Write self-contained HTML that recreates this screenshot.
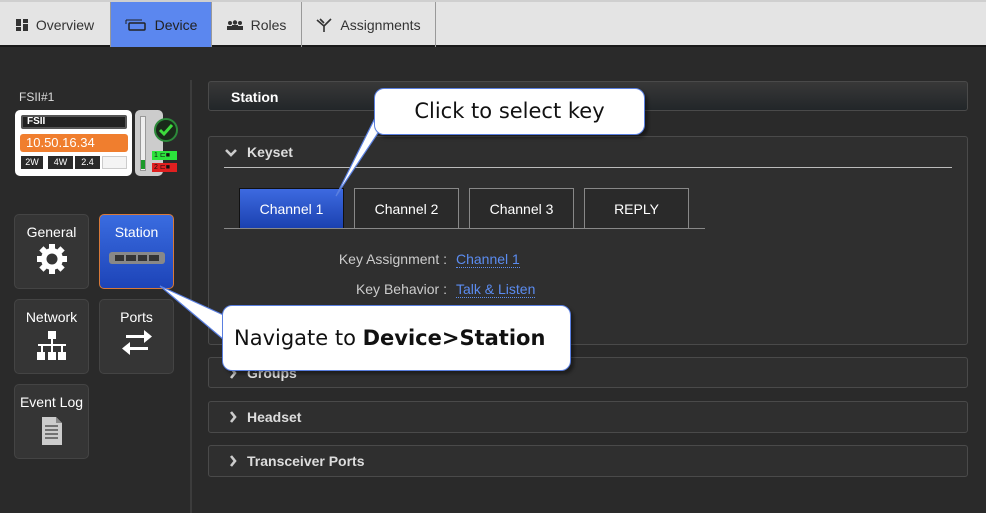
<!DOCTYPE html>
<html><head><meta charset="utf-8"><style>
*{box-sizing:border-box;margin:0;padding:0}
body{width:986px;height:513px;background:#2a2a2a;font-family:"Liberation Sans",sans-serif;position:relative;overflow:hidden;color:#fff}
.abs{position:absolute}
.top{left:0;top:0;width:986px;height:47px;background:#e4e4e4;border-top:2px solid #cfcfcf;border-bottom:2px solid #1a1a1a}
.tab{position:absolute;top:0;height:45px;border-right:1px solid #999;color:#333;font-size:14px;display:flex;align-items:center;justify-content:center;gap:8px}
.tile{position:absolute;width:75px;height:75px;border-radius:5px;background:#353535;border:1px solid #444;font-size:14px;text-align:center;padding-top:9px}
.panel{position:absolute;left:208px;width:760px;border:1px solid #4a4a4a;border-radius:3px;background:#2f2f2f;font-weight:bold;font-size:14px;color:#ddd}
.key{position:absolute;top:188px;height:40px;width:105px;border:1px solid #888;border-bottom:none;font-size:14px;display:flex;align-items:center;justify-content:center;color:#fff;background:#2a2a2a}
.lbl{position:absolute;font-size:14px;color:#ccc;text-align:right;width:200px;left:247px}
.lnk{position:absolute;left:456px;font-size:14px;color:#5b8cf0;border-bottom:1px dotted #5b8cf0;line-height:16px}
.chev{display:inline-block;margin-right:10px;vertical-align:-1px}
</style></head><body>
<div class="abs top">
 <div class="tab" style="left:0;width:111px"><svg width="12" height="12"><rect x="0" y="0" width="5" height="7" fill="#333"/><rect x="7" y="0" width="5" height="4" fill="#333"/><rect x="0" y="8" width="5" height="4" fill="#333"/><rect x="7" y="5" width="5" height="7" fill="#333"/></svg>Overview</div>
 <div class="tab" style="left:111px;width:101px;background:#5b87ef;color:#222"><svg width="22" height="12"><path d="M1 1h16M1 1v4" stroke="#222" fill="none"/><rect x="4" y="4" width="16" height="7" rx="1" stroke="#222" stroke-width="1.5" fill="none"/></svg>Device</div>
 <div class="tab" style="left:212px;width:90px"><svg width="16" height="10"><circle cx="3" cy="3" r="2" fill="#333"/><circle cx="8" cy="2.5" r="2.2" fill="#333"/><circle cx="13" cy="3" r="2" fill="#333"/><rect x="0" y="6" width="5" height="4" fill="#333"/><rect x="5" y="5" width="6" height="5" fill="#333"/><rect x="11" y="6" width="5" height="4" fill="#333"/></svg>Roles</div>
 <div class="tab" style="left:302px;width:134px"><svg width="16" height="14"><path d="M1 2l7 6 7-7M8 8v6M4 1l4 4" stroke="#333" stroke-width="1.6" fill="none"/></svg>Assignments</div>
</div>
<div class="abs" style="left:190px;top:80px;width:2px;height:433px;background:#3c3c3c"></div>
<div class="abs" style="left:19px;top:90px;font-size:12px;color:#ddd">FSII#1</div>
<div class="abs" style="left:15px;top:110px;width:117px;height:66px;background:#fff;border-radius:5px"></div>
<div class="abs" style="left:21px;top:115px;width:106px;height:14px;background:#222;border:2px solid #555;border-radius:2px;font-size:10px;font-weight:bold;padding-left:4px;line-height:10px">FSII</div>
<div class="abs" style="left:20px;top:134px;width:108px;height:18px;background:#f07e2e;border-radius:3px;font-size:13px;padding-left:6px;line-height:18px">10.50.16.34</div>
<div class="abs" style="left:21px;top:156px;width:22px;height:13px;background:#2a2a2a;font-size:9px;text-align:center;line-height:13px">2W</div>
<div class="abs" style="left:48px;top:156px;width:25px;height:13px;background:#2a2a2a;font-size:9px;text-align:center;line-height:13px">4W</div>
<div class="abs" style="left:75px;top:156px;width:25px;height:13px;background:#2a2a2a;font-size:9px;text-align:center;line-height:13px">2.4</div>
<div class="abs" style="left:102px;top:156px;width:25px;height:13px;background:#f4f4f4;border:1px solid #ccc"></div>
<div class="abs" style="left:135px;top:110px;width:28px;height:66px;background:#ccc;border-radius:5px"></div>
<div class="abs" style="left:140px;top:116px;width:6px;height:55px;background:#eee;border:1px solid #999"></div>
<div class="abs" style="left:141px;top:160px;width:4px;height:9px;background:#1a9a2a"></div>
<div class="abs" style="left:154px;top:118px;width:24px;height:24px;border-radius:50%;background:#1a2a1a;border:2px solid #2c8a3a"><svg width="20" height="20"><path d="M4 10l4 4 8-9" stroke="#3ddc3d" stroke-width="3" fill="none"/></svg></div>
<div class="abs" style="left:152px;top:151px;width:25px;height:9px;background:#2ce33c;font-size:7px;color:#111;line-height:9px;padding-left:2px">1 ⊏■</div>
<div class="abs" style="left:152px;top:163px;width:25px;height:9px;background:#e02020;font-size:7px;color:#111;line-height:9px;padding-left:2px">2 ⊏■</div>

<div class="tile" style="left:14px;top:214px">General<br><svg width="34" height="34" style="margin-top:2px" viewBox="0 0 34 34"><g fill="#fff"><circle cx="17" cy="17" r="11"/><rect x="14" y="2" width="6" height="30"/><rect x="14" y="2" width="6" height="30" transform="rotate(45 17 17)"/><rect x="14" y="2" width="6" height="30" transform="rotate(90 17 17)"/><rect x="14" y="2" width="6" height="30" transform="rotate(135 17 17)"/></g><circle cx="17" cy="17" r="5.5" fill="#353535"/></svg></div>
<div class="tile" style="left:99px;top:214px;background:linear-gradient(#3a6ce0,#1d44b8);border-color:#d87a3a">Station<br><div style="margin:12px auto 0;width:56px;height:12px;border-radius:3px;background:#888;display:flex;gap:2px;padding:3px 6px"><span style="flex:1;background:#333"></span><span style="flex:1;background:#333"></span><span style="flex:1;background:#333"></span><span style="flex:1;background:#333"></span></div></div>
<div class="tile" style="left:14px;top:299px">Network<br><svg width="34" height="30" style="margin-top:6px"><g fill="#fff"><rect x="13" y="0" width="8" height="8"/><rect x="16" y="8" width="2" height="6"/><rect x="3" y="13" width="28" height="2"/><rect x="6" y="14" width="2" height="8"/><rect x="16" y="14" width="2" height="8"/><rect x="26" y="14" width="2" height="8"/><rect x="2" y="21" width="8" height="8"/><rect x="13" y="21" width="8" height="8"/><rect x="23" y="21" width="8" height="8"/></g></svg></div>
<div class="tile" style="left:99px;top:299px">Ports<br><svg width="34" height="30" style="margin-top:4px"><g fill="#fff"><rect x="6" y="6" width="20" height="3"/><path d="M24 1l8 6.5-8 6.5z"/><rect x="8" y="18" width="20" height="3"/><path d="M10 13l-8 6.5 8 6.5z"/></g></svg></div>
<div class="tile" style="left:14px;top:384px">Event Log<br><svg width="22" height="30" style="margin-top:6px"><path d="M1 1h14l6 6v22H1z" fill="#ccc"/><path d="M15 1v6h6" fill="#888"/><g stroke="#555" stroke-width="1.5"><path d="M4 10h13M4 14h13M4 18h13M4 22h13"/></g></svg></div>

<div class="panel" style="top:81px;height:30px;background:linear-gradient(#383838,#222629);padding:7px 0 0 22px;color:#fff">Station</div>
<div class="panel" style="top:136px;height:209px;background:#2f2f2f">
 <div style="position:absolute;left:16px;top:7px"><svg class="chev" width="12" height="10"><path d="M1 2l5 5 5-5" stroke="#ccc" stroke-width="2.6" fill="none"/></svg>Keyset</div>
 <div style="position:absolute;left:15px;top:30px;width:728px;height:1px;background:#bbb"></div>
 <div style="position:absolute;left:15px;top:91px;width:481px;height:1px;background:#888"></div>
</div>
<div class="key" style="left:239px;background:linear-gradient(#3d6ae0,#1b41b0);border-color:#111">Channel 1</div>
<div class="key" style="left:354px">Channel 2</div>
<div class="key" style="left:469px">Channel 3</div>
<div class="key" style="left:584px">REPLY</div>
<div class="lbl" style="top:251px">Key Assignment :</div>
<div class="lnk" style="top:251px">Channel 1</div>
<div class="lbl" style="top:281px">Key Behavior :</div>
<div class="lnk" style="top:281px">Talk &amp; Listen</div>
<div class="panel" style="top:357px;height:31px;padding:7px 0 0 20px"><svg class="chev" width="8" height="12"><path d="M2 1l4 5-4 5" stroke="#ccc" stroke-width="2.6" fill="none"/></svg>Groups</div>
<div class="panel" style="top:401px;height:32px;padding:7px 0 0 20px"><svg class="chev" width="8" height="12"><path d="M2 1l4 5-4 5" stroke="#ccc" stroke-width="2.6" fill="none"/></svg>Headset</div>
<div class="panel" style="top:445px;height:32px;padding:7px 0 0 20px"><svg class="chev" width="8" height="12"><path d="M2 1l4 5-4 5" stroke="#ccc" stroke-width="2.6" fill="none"/></svg>Transceiver Ports</div>

<svg class="abs" style="left:0;top:0" width="986" height="513">
<path d="M378 112 L336 196 L392 112Z" fill="#fff" stroke="#5a7fe0" stroke-width="1.2"/>
<path d="M230 318 L160 286 L230 345Z" fill="#fff" stroke="#5a7fe0" stroke-width="1.2"/>
</svg>
<div class="abs" style="left:374px;top:88px;width:271px;height:47px;background:#fff;border:1.5px solid #5a7fe0;border-radius:10px;box-shadow:3px 3px 3px rgba(0,0,0,.4);color:#111;font-family:'DejaVu Sans',sans-serif;font-size:21px;text-align:center;line-height:44px">Click to select key</div>
<div class="abs" style="left:222px;top:305px;width:349px;height:66px;background:#fff;border:1.5px solid #5a7fe0;border-radius:10px;box-shadow:3px 3px 3px rgba(0,0,0,.4);color:#111;font-family:'DejaVu Sans',sans-serif;font-size:21px;padding-left:11px;line-height:64px">Navigate to <b>Device&gt;Station</b></div>
</body></html>
